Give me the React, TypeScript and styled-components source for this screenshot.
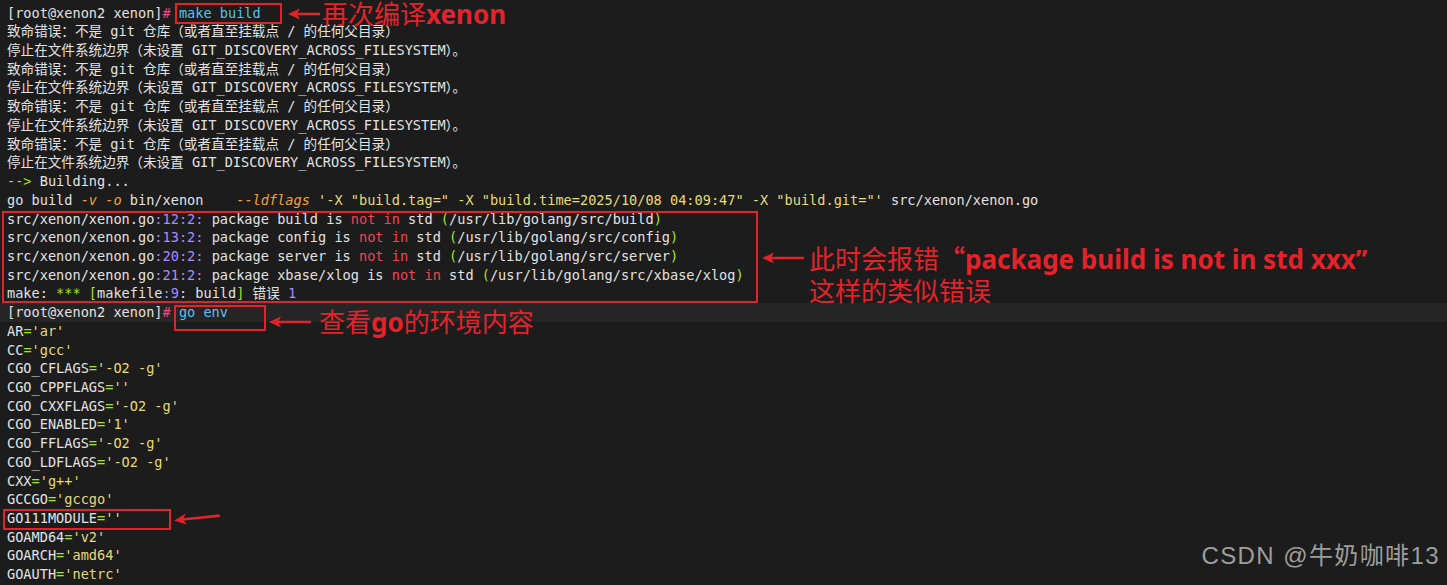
import React from "react";
import styled, { createGlobalStyle } from "styled-components";

const GlobalStyle = createGlobalStyle`
  html, body {
    margin: 0;
    padding: 0;
    background: #1c1c1c;
  }
`;

const C = {
  fg: "#e2e2e2",
  cyan: "#58c2ea",
  pink: "#f2437c",
  green: "#a6e22e",
  orange: "#f2a03c",
  yellow: "#e6db74",
  purple: "#a98bff",
  red: "#f2444e",
  mark: "#e4222a",
};

const Screen = styled.div`
  position: relative;
  width: 1447px;
  height: 585px;
  overflow: hidden;
  box-sizing: border-box;
  padding-top: 3.6px;
  background: #1c1c1c;
  color: ${C.fg};
  font-family: "DejaVu Sans Mono", "Noto Sans CJK SC", monospace;
  font-size: 13.6px;
  line-height: 18.73px;
`;

const Line = styled.div<{ $band?: boolean }>`
  height: 18.73px;
  padding-left: 7px;
  white-space: pre;
  background: ${({ $band }) => ($band ? "#252525" : "transparent")};
`;

const Tok = styled.span<{ $c?: string; $i?: boolean }>`
  color: ${({ $c }) => $c || "inherit"};
  font-style: ${({ $i }) => ($i ? "italic" : "normal")};
`;

const MarkSpan = styled.span<{ $l: number; $t: number; $r: number; $b: number }>`
  position: relative;
  display: inline-block;
  vertical-align: top;
  &::after {
    content: "";
    position: absolute;
    left: ${({ $l }) => $l}px;
    top: ${({ $t }) => $t}px;
    right: ${({ $r }) => $r}px;
    bottom: ${({ $b }) => $b}px;
    border: 2px solid ${C.mark};
    pointer-events: none;
  }
`;

const MarkBlock = styled.div`
  position: relative;
  &::after {
    content: "";
    position: absolute;
    left: 2px;
    width: 752px;
    top: 1px;
    bottom: 0px;
    border: 2px solid ${C.mark};
    pointer-events: none;
  }
`;

const Callout = styled.div<{ $x: number; $y: number; $gap: number }>`
  position: absolute;
  left: ${({ $x }) => $x}px;
  top: ${({ $y }) => $y}px;
  display: flex;
  align-items: flex-start;
  gap: ${({ $gap }) => $gap}px;
`;

const Note = styled.div<{ $lh: number }>`
  color: ${C.mark};
  font-family: "Noto Sans", "Noto Sans CJK SC", sans-serif;
  font-size: 26px;
  line-height: ${({ $lh }) => $lh}px;
  white-space: pre;
`;

const Strong = styled.span`
  font-weight: 700;
`;

const CjkQuote = styled.span`
  font-family: "Noto Sans CJK SC", sans-serif;
  font-weight: 700;
`;

const Watermark = styled.div`
  position: absolute;
  right: 7px;
  top: 540px;
  color: #9e9e9e;
  font-family: "Liberation Sans", "Noto Sans CJK SC", sans-serif;
  font-size: 24px;
  line-height: 32px;
  letter-spacing: 1.4px;
`;

const ArrowSvg = styled.svg<{ $rot?: number }>`
  display: block;
  flex-shrink: 0;
  transform: rotate(${({ $rot }) => $rot || 0}deg);
`;

function Arrow({ width, height = 32, rot }: { width: number; height?: number; rot?: number }) {
  const m = height / 2;
  return (
    <ArrowSvg $rot={rot} width={width} height={height} viewBox={`0 0 ${width} ${height}`}>
      <line x1={8} y1={m} x2={width} y2={m} stroke={C.mark} strokeWidth={2.6} />
      <polygon points={`0,${m} 12,${m - 5.5} 9,${m} 12,${m + 5.5}`} fill={C.mark} />
    </ArrowSvg>
  );
}

function Prompt({ cmd }: { cmd: React.ReactNode }) {
  return (
    <>
      <Tok>[root@xenon2 xenon]</Tok>
      <Tok $c={C.pink}>#</Tok>
      {" "}
      {cmd}
    </>
  );
}

const gitErr = "致命错误：不是 git 仓库（或者直至挂载点 / 的任何父目录）";
const gitStop = "停止在文件系统边界（未设置 GIT_DISCOVERY_ACROSS_FILESYSTEM）。";

const pkgErrors = [
  ["12:2", "build", "/usr/lib/golang/src/build"],
  ["13:2", "config", "/usr/lib/golang/src/config"],
  ["20:2", "server", "/usr/lib/golang/src/server"],
  ["21:2", "xbase/xlog", "/usr/lib/golang/src/xbase/xlog"],
];

const envVars: [string, string][] = [
  ["AR", "'ar'"],
  ["CC", "'gcc'"],
  ["CGO_CFLAGS", "'-O2 -g'"],
  ["CGO_CPPFLAGS", "''"],
  ["CGO_CXXFLAGS", "'-O2 -g'"],
  ["CGO_ENABLED", "'1'"],
  ["CGO_FFLAGS", "'-O2 -g'"],
  ["CGO_LDFLAGS", "'-O2 -g'"],
  ["CXX", "'g++'"],
  ["GCCGO", "'gccgo'"],
  ["GO111MODULE", "''"],
  ["GOAMD64", "'v2'"],
  ["GOARCH", "'amd64'"],
  ["GOAUTH", "'netrc'"],
];

function EnvLine({ name, value }: { name: string; value: string }) {
  const body = (
    <>
      <Tok>{name}</Tok>
      <Tok $c={C.green}>=</Tok>
      <Tok $c={C.yellow}>{value}</Tok>
    </>
  );
  if (name === "GO111MODULE") {
    return (
      <Line>
        <MarkSpan $l={-4} $t={0} $r={-49} $b={-2}>
          {body}
        </MarkSpan>
      </Line>
    );
  }
  return <Line>{body}</Line>;
}

export default function App() {
  return (
    <>
      <GlobalStyle />
      <Screen>
        <Line>
          <Prompt
            cmd={
              <MarkSpan $l={-4} $t={-1} $r={-21} $b={-2}>
                <Tok $c={C.cyan}>make build</Tok>
              </MarkSpan>
            }
          />
        </Line>
        {[0, 1, 2, 3].map((i) => (
          <React.Fragment key={i}>
            <Line>{gitErr}</Line>
            <Line>{gitStop}</Line>
          </React.Fragment>
        ))}
        <Line>
          <Tok $c={C.green}>--&gt;</Tok> Building...
        </Line>
        <Line>
          go build <Tok $c={C.orange} $i>-v</Tok> <Tok $c={C.orange} $i>-o</Tok> bin/xenon{"    "}
          <Tok $c={C.orange} $i>--ldflags</Tok>{" "}
          <Tok $c={C.yellow}>'-X "build.tag=" -X "build.time=2025/10/08 04:09:47" -X "build.git="'</Tok>{" "}
          src/xenon/xenon.go
        </Line>
        <MarkBlock>
          {pkgErrors.map(([pos, pkg, path]) => (
            <Line key={pos}>
              src/xenon/xenon.go<Tok $c={C.purple}>:{pos}:</Tok> package {pkg} is{" "}
              <Tok $c={C.red}>not in</Tok> std <Tok $c={C.green}>(</Tok>
              {path}
              <Tok $c={C.green}>)</Tok>
            </Line>
          ))}
          <Line>
            make: <Tok $c={C.green}>***</Tok> <Tok $c={C.green}>[</Tok>makefile
            <Tok $c={C.purple}>:9</Tok>: build<Tok $c={C.green}>]</Tok> 错误 <Tok $c={C.purple}>1</Tok>
          </Line>
        </MarkBlock>
        <Line $band>
          <Prompt
            cmd={
              <MarkSpan $l={-5} $t={2} $r={-38} $b={-9}>
                <Tok $c={C.cyan}>go env</Tok>
              </MarkSpan>
            }
          />
        </Line>
        {envVars.map(([n, v]) => (
          <EnvLine key={n} name={n} value={v} />
        ))}

        <Callout $x={288} $y={0} $gap={2}>
          <Arrow width={32} height={28} />
          <Note $lh={28}>
            再次编译<Strong>xenon</Strong>
          </Note>
        </Callout>
        <Callout $x={762} $y={242} $gap={5}>
          <Arrow width={42} />
          <Note $lh={32}>
            此时会报错<CjkQuote>“</CjkQuote>
            <Strong>package build is not in std xxx”</Strong>
            {"\n"}这样的类似错误
          </Note>
        </Callout>
        <Callout $x={269} $y={306} $gap={8}>
          <Arrow width={42} />
          <Note $lh={32}>
            查看<Strong>go</Strong>的环境内容
          </Note>
        </Callout>
        <Callout $x={174} $y={502} $gap={0}>
          <Arrow width={46} rot={-6} />
        </Callout>

        <Watermark>CSDN @牛奶咖啡13</Watermark>
      </Screen>
    </>
  );
}
